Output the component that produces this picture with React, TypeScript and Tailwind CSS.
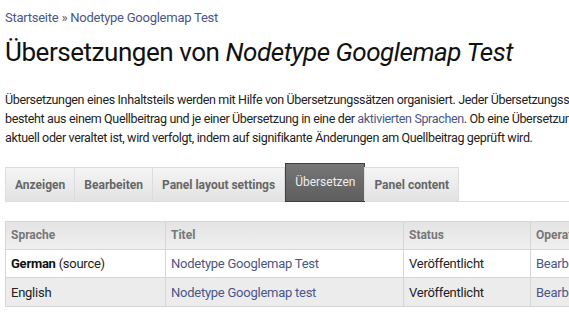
import React from 'react';

const tabs = [
  { label: 'Anzeigen', active: false },
  { label: 'Bearbeiten', active: false },
  { label: 'Panel layout settings', active: false },
  { label: 'Übersetzen', active: true },
  { label: 'Panel content', active: false },
];

const rows = [
  { lang: 'German', source: true, title: 'Nodetype Googlemap Test', status: 'Veröffentlicht' },
  { lang: 'English', source: false, title: 'Nodetype Googlemap test', status: 'Veröffentlicht' },
];

const App: React.FC = () => {
  return (
    <div
      className="w-[569px] h-[316px] overflow-hidden bg-white text-[#222] px-[5px]"
      style={{ fontFamily: 'Roboto, "Noto Sans", sans-serif' }}
    >
      {/* Breadcrumb */}
      <div className="pt-[8px] text-[13px] leading-[19px] tracking-[-0.25px] text-[#4a5689] whitespace-nowrap">
        <a>Startseite</a> » <a>Nodetype Googlemap Test</a>
      </div>

      <h1 className="mt-[9px] text-[26px] leading-[32px] tracking-[-0.45px] font-normal text-[#111] whitespace-nowrap">
        Übersetzungen von <em className="italic">Nodetype Googlemap Test</em>
      </h1>

      <p className="mt-[22px] text-[12.5px] leading-[19px] tracking-[-0.35px] text-[#222] whitespace-nowrap">
        Übersetzungen eines Inhaltsteils werden mit Hilfe von Übersetzungssätzen organisiert. Jeder Übersetzungssatz
        <br />
        besteht aus einem Quellbeitrag und je einer Übersetzung in eine der{' '}
        <a className="text-[#4a5689]">aktivierten Sprachen</a>. Ob eine Übersetzung
        <br />
        aktuell oder veraltet ist, wird verfolgt, indem auf signifikante Änderungen am Quellbeitrag geprüft wird.
      </p>

      {/* Tabs */}
      <ul className="mt-[16px] flex items-end border-b border-[#dcdcdc] w-[700px]">
        {tabs.map((t) =>
          t.active ? (
            <li
              key={t.label}
              className="h-[39px] -mb-px px-[9px] flex items-center border border-[#3f3f3f] bg-gradient-to-b from-[#767676] to-[#5e5e5e] text-[#eeeeee] text-[12px] pb-[2px]"
            >
              {t.label}
            </li>
          ) : (
            <li
              key={t.label}
              className="h-[34px] px-[9px] flex items-center border-t border-l border-r border-[#dcdcdc] -ml-px first:ml-0 bg-gradient-to-b from-[#f5f5f5] to-[#e2e2e2] text-[#666] text-[12px] font-bold"
            >
              {t.label}
            </li>
          )
        )}
      </ul>

      {/* Table */}
      <table className="mt-[19px] w-[700px] border-collapse text-[13px] leading-[19px] tracking-[-0.25px]">
        <thead>
          <tr className="h-[28px] bg-gradient-to-b from-[#e4e4e4] to-[#f0f0f0]">
            <th className="w-[160px] border border-[#d6d6d6] pl-[5px] text-left font-bold text-[#777] text-[12px] tracking-normal">Sprache</th>
            <th className="w-[238px] border border-[#d6d6d6] pl-[5px] text-left font-bold text-[#777] text-[12px] tracking-normal">Titel</th>
            <th className="w-[127px] border border-[#d6d6d6] pl-[5px] text-left font-bold text-[#777] text-[12px] tracking-normal">Status</th>
            <th className="border border-[#d6d6d6] pl-[5px] text-left font-bold text-[#777] text-[12px] tracking-normal">Operationen</th>
          </tr>
        </thead>
        <tbody>
          {rows.map((r, i) => (
            <tr key={r.lang} className={i === 0 ? 'h-[28px] bg-white' : 'h-[29px] bg-[#ececec]'}>
              <td className="border border-[#d6d6d6] pl-[5px]">
                {r.source ? (
                  <>
                    <strong className="font-bold text-[#111]">{r.lang}</strong> (source)
                  </>
                ) : (
                  r.lang
                )}
              </td>
              <td className="border border-[#d6d6d6] pl-[5px]">
                <a className="text-[#4a5689]">{r.title}</a>
              </td>
              <td className="border border-[#d6d6d6] pl-[5px]">{r.status}</td>
              <td className="border border-[#d6d6d6] pl-[5px]">
                <a className="text-[#4a5689]">Bearbeiten</a>
              </td>
            </tr>
          ))}
        </tbody>
      </table>
    </div>
  );
};

export default App;
